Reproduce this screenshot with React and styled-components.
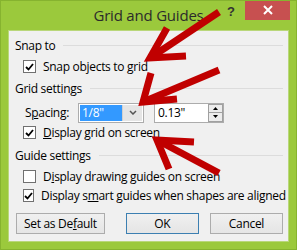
import React from 'react'
import styled, { createGlobalStyle } from 'styled-components'

const Global = createGlobalStyle`
  html, body { margin: 0; padding: 0; background: #ffffff; }
  body { font-family: "Open Sans", "Liberation Sans", sans-serif; }
`

const Styled = {
    Window: styled.div`
    position: relative;
    display: flex;
    flex-direction: column;
    width: 297px;
    height: 250px;
    box-sizing: border-box;
    background-color: #9bc93c;
    border: 1px solid #86b32f;
    overflow: hidden;
  `,
    TitleBar: styled.div`
    position: relative;
    display: flex;
    align-items: center;
    justify-content: center;
    height: 29px;
    flex-shrink: 0;
  `,
    Title: styled.div`
    font-size: 15px;
    letter-spacing: -0.2px;
    color: #2b2b2b;
    margin-top: -1px;
  `,
    Help: styled.div`
    position: absolute;
    left: 226px;
    top: 3px;
    font-family: "Liberation Sans", sans-serif;
    font-weight: bold;
    font-size: 13px;
    color: #333333;
  `,
    Close: styled.div`
    position: absolute;
    right: 6px;
    top: -1px;
    width: 45px;
    height: 20px;
    display: flex;
    align-items: center;
    justify-content: center;
    background-color: #c75050;
  `,
    Panel: styled.div`
    display: flex;
    flex-direction: column;
    margin: 0 7px 0 7px;
    height: 212px;
    box-sizing: border-box;
    padding: 0 5px 0 6px;
    background-color: #f0f0f0;
    border: 1px solid #b9d77a;
    font-size: 12px;
    letter-spacing: -0.3px;
    color: #000000;
  `,
    Heading: styled.div`
    display: flex;
    align-items: center;
    height: 20px;
    margin-top: ${props => props.top}px;
    white-space: nowrap;
    &::after {
      content: '';
      flex: 1;
      height: 1px;
      margin-left: 8px;
      background-color: #dcdcdc;
    }
  `,
    CheckRow: styled.label`
    display: flex;
    align-items: center;
    height: 19px;
    margin-top: ${props => props.top || 0}px;
    padding-left: 8px;
    white-space: nowrap;
  `,
    Box: styled.span`
    display: flex;
    align-items: center;
    justify-content: center;
    width: 11px;
    height: 11px;
    margin-right: 7px;
    background-color: #ffffff;
    border: 1px solid #707070;
  `,
    SpacingRow: styled.div`
    display: flex;
    align-items: center;
    height: 21px;
    margin-top: 4px;
    padding-left: 10px;
  `,
    SpacingLabel: styled.span`
    width: 53px;
  `,
    Select: styled.div`
    display: flex;
    width: 62px;
    height: 16px;
    padding: 1px;
    background-color: #ffffff;
    border: 1px solid #acacac;
  `,
    Selected: styled.div`
    flex: 1;
    display: flex;
    align-items: center;
    padding-left: 2px;
    background-color: #3399ff;
    color: #ffffff;
  `,
    DropButton: styled.div`
    display: flex;
    align-items: center;
    justify-content: center;
    width: 19px;
    background-color: #e5e5e5;
    border-left: 1px solid #d0d0d0;
  `,
    Spin: styled.div`
    display: flex;
    width: 66px;
    height: 16px;
    margin-left: 10px;
    padding: 1px;
    background-color: #ffffff;
    border: 1px solid #acacac;
  `,
    SpinText: styled.div`
    flex: 1;
    display: flex;
    align-items: center;
    padding-left: 2px;
  `,
    SpinButtons: styled.div`
    display: flex;
    flex-direction: column;
    width: 13px;
    border: 1px solid #a0a0a0;
    margin: -1px -1px -1px 0;
  `,
    SpinHalf: styled.div`
    flex: 1;
    display: flex;
    align-items: center;
    justify-content: center;
    background-color: #ececec;
    & + & { border-top: 1px solid #a0a0a0; }
  `,
    Buttons: styled.div`
    display: flex;
    margin-top: 8px;
    padding-left: 1px;
  `,
    Button: styled.div`
    display: flex;
    align-items: center;
    justify-content: center;
    width: ${props => props.w}px;
    height: 19px;
    margin-left: ${props => props.gap || 0}px;
    background: linear-gradient(#f0f0f0, #e5e5e5);
    border: 1px solid ${props => props.primary ? '#3c7fb1' : '#acacac'};
  `,
    U: styled.span`
    text-decoration: underline;
  `,
    Arrows: styled.svg`
    position: absolute;
    left: 0;
    top: 0;
    pointer-events: none;
  `
}

const Tick = () => (
    <svg width="9" height="8" viewBox="0 0 9 8">
        <path d="M1 4 L3.5 6.5 L8 1" fill="none" stroke="#000" strokeWidth="1.8" />
    </svg>
)

const Check = ({ checked, top, children }) => (
    <Styled.CheckRow top={top}>
        <Styled.Box>{checked && <Tick />}</Styled.Box>
        <span>{children}</span>
    </Styled.CheckRow>
)

const Arrow = ({ tip, tail, w1, w2 }) => (
    <g>
        <line x1={tip[0]} y1={tip[1]} x2={tail[0]} y2={tail[1]} />
        <polyline points={`${w1[0]},${w1[1]} ${tip[0]},${tip[1]} ${w2[0]},${w2[1]}`} fill="none" />
    </g>
)

const App = () => {
    return (
        <>
            <Global />
            <Styled.Window>
                <Styled.TitleBar>
                    <Styled.Title>Grid and Guides</Styled.Title>
                    <Styled.Help>?</Styled.Help>
                    <Styled.Close>
                        <svg width="10" height="10" viewBox="0 0 10 10">
                            <path d="M1 1 L9 9 M9 1 L1 9" stroke="#fff" strokeWidth="2" />
                        </svg>
                    </Styled.Close>
                </Styled.TitleBar>
                <Styled.Panel>
                    <Styled.Heading top={4}>Snap to</Styled.Heading>
                    <Check checked top={2}>Snap objects to <Styled.U>g</Styled.U>rid</Check>
                    <Styled.Heading top={2}>Grid settings</Styled.Heading>
                    <Styled.SpacingRow>
                        <Styled.SpacingLabel>S<Styled.U>p</Styled.U>acing:</Styled.SpacingLabel>
                        <Styled.Select>
                            <Styled.Selected>1/8"</Styled.Selected>
                            <Styled.DropButton>
                                <svg width="8" height="5" viewBox="0 0 8 5">
                                    <path d="M1 1 L4 4 L7 1" fill="none" stroke="#555" strokeWidth="1.5" />
                                </svg>
                            </Styled.DropButton>
                        </Styled.Select>
                        <Styled.Spin>
                            <Styled.SpinText>0.13"</Styled.SpinText>
                            <Styled.SpinButtons>
                                <Styled.SpinHalf>
                                    <svg width="5" height="3" viewBox="0 0 5 3"><path d="M0 3 L2.5 0 L5 3 Z" fill="#000" /></svg>
                                </Styled.SpinHalf>
                                <Styled.SpinHalf>
                                    <svg width="5" height="3" viewBox="0 0 5 3"><path d="M0 0 L2.5 3 L5 0 Z" fill="#000" /></svg>
                                </Styled.SpinHalf>
                            </Styled.SpinButtons>
                        </Styled.Spin>
                    </Styled.SpacingRow>
                    <Check checked><Styled.U>D</Styled.U>isplay grid on screen</Check>
                    <Styled.Heading top={3}>Guide settings</Styled.Heading>
                    <Check top={2}>D<Styled.U>i</Styled.U>splay drawing guides on screen</Check>
                    <Check checked>Display s<Styled.U>m</Styled.U>art guides when shapes are aligned</Check>
                    <Styled.Buttons>
                        <Styled.Button w={89}>Set as De<Styled.U>f</Styled.U>ault</Styled.Button>
                        <Styled.Button w={73} gap={21} primary>OK</Styled.Button>
                        <Styled.Button w={73} gap={11}>Cancel</Styled.Button>
                    </Styled.Buttons>
                </Styled.Panel>
                <Styled.Arrows width="297" height="250" stroke="#c00000" strokeWidth="7">
                    <Arrow tip={[149, 57]} tail={[218, 11]} w1={[166, 27]} w2={[185, 55]} />
                    <Arrow tip={[142, 101]} tail={[218, 69]} w1={[150, 72]} w2={[176, 98]} />
                    <Arrow tip={[156, 139]} tail={[218, 172]} w1={[193, 141]} w2={[168, 168]} />
                </Styled.Arrows>
            </Styled.Window>
        </>
    )
}

export default App
